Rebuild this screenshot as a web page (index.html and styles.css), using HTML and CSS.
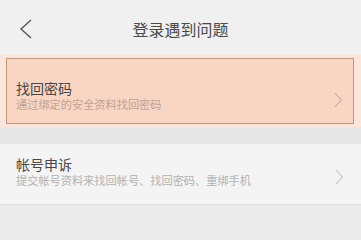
FILE: index.html
```html
<!DOCTYPE html>
<html lang="zh-CN">
<head>
<meta charset="utf-8">
<link rel="stylesheet" href="styles.css">
</head>
<body>
<div class="page">
  <header class="topbar">
    <div class="back">
      <svg width="14" height="20" viewBox="0 0 14 20"><path d="M12 1 L2 10 L12 19" fill="none" stroke="#555" stroke-width="1.4"/></svg>
    </div>
    <div class="title">登录遇到问题</div>
    <div></div>
  </header>
  <div class="hl-wrap">
    <div class="item hl">
      <div class="texts">
        <div class="item-title">找回密码</div>
        <div class="item-sub">通过绑定的安全资料找回密码</div>
      </div>
      <svg class="chev" width="10" height="16" viewBox="0 0 10 16"><path d="M2 1 L8.5 8 L2 15" fill="none" stroke="#cfb2a4" stroke-width="1.2"/></svg>
    </div>
  </div>
  <div class="gap"></div>
  <div class="item plain">
    <div class="texts">
      <div class="item-title">帐号申诉</div>
      <div class="item-sub">提交帐号资料来找回帐号、找回密码、重绑手机</div>
    </div>
    <svg class="chev" width="10" height="16" viewBox="0 0 10 16"><path d="M2 1 L8.5 8 L2 15" fill="none" stroke="#cccccc" stroke-width="1.2"/></svg>
  </div>
  <div class="rest"></div>
</div>
</body>
</html>
```

FILE: styles.css
```css
html, body {
  margin: 0;
  padding: 0;
  background: #ececec;
  font-family: "Noto Sans CJK SC", "Noto Sans", sans-serif;
}
.page {
  width: 361px;
  height: 217px;
  overflow: hidden;
  display: flex;
  flex-direction: column;
}
.topbar {
  height: 55px;
  flex: none;
  background: #f0f0f0;
  display: grid;
  grid-template-columns: 1fr auto 1fr;
  align-items: center;
}
.back {
  padding-left: 19px;
  padding-top: 2px;
  display: flex;
}
.title {
  font-size: 16px;
  color: #4a4a4a;
  line-height: 20px;
  margin-top: 3px;
}
.hl-wrap {
  flex: none;
  background: #fae6dc;
  padding: 3px 7px 3px 6px;
}
.item {
  display: flex;
  align-items: center;
}
.hl {
  height: 64px;
  border: 1px solid #c69479;
  background: #f9d5c3;
  padding-left: 9px;
  padding-right: 10px;
  align-items: flex-start;
}
.hl .texts {
  padding-top: 22px;
}
.hl .chev {
  margin-top: 33px;
}
.texts {
  flex: 1;
}
.item-title {
  font-size: 14px;
  line-height: 15px;
  color: #474747;
}
.item-sub {
  font-size: 11.2px;
  line-height: 13px;
  color: rgba(0, 0, 0, 0.28);
  margin-top: 2px;
}
.hl .item-sub {
  color: #c0a395;
}
.gap {
  flex: none;
  height: 16px;
  background: #e7e7e7;
  border-top: 1px solid #f3e2da;
}
.plain {
  flex: none;
  height: 60px;
  background: #f4f4f4;
  padding-left: 16px;
  padding-right: 17px;
  border-bottom: 1px solid #dedede;
  align-items: flex-start;
}
.plain .texts {
  padding-top: 13px;
}
.plain .item-sub {
  color: #b2b2b2;
}
.plain .chev {
  margin-top: 25px;
}
.rest {
  flex: 1;
  background: #ebebeb;
}
```
